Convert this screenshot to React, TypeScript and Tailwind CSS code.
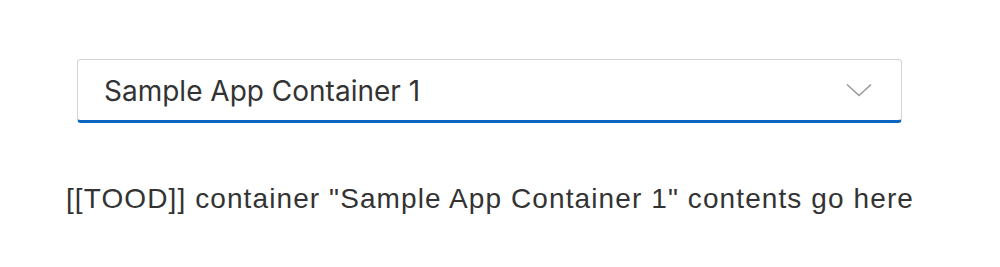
import React from "react";

function ContainerSelect() {
  return (
    <div className="flex items-center justify-between w-[825px] h-[64px] pl-[26px] pr-[29px] bg-white border border-[#d4d4d4] border-b-[3px] border-b-[#0a66c2] rounded-[4px]">
      <span className="text-[28px] leading-none pt-[2px] text-[#333333] font-['Inter',sans-serif]">
        Sample App Container 1
      </span>
      <svg width="26" height="14" viewBox="0 0 26 14" fill="none">
        <path d="M1 1.5 L13 12.5 L25 1.5" stroke="#9a9a9a" strokeWidth="1.6" />
      </svg>
    </div>
  );
}

export default function App() {
  return (
    <div className="w-[1000px] h-[267px] bg-white">
      <div className="pt-[59px] pl-[77px]">
        <ContainerSelect />
      </div>
      <p className="w-[980px] mt-[55px] leading-[42px] text-center text-[28px] tracking-[1.1px] text-[#333333] font-['Liberation_Sans',sans-serif]">
        [[TOOD]] container "Sample App Container 1" contents go here
      </p>
    </div>
  );
}
